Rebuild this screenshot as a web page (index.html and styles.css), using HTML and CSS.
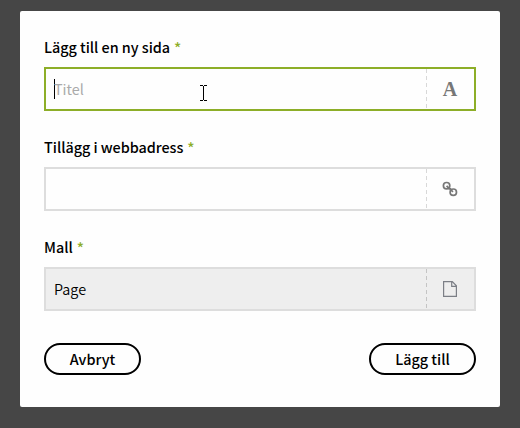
FILE: index.html
```html
<!DOCTYPE html>
<html lang="sv">
<head>
<meta charset="utf-8">
<title>Lägg till en ny sida</title>
<link rel="stylesheet" href="styles.css">
</head>
<body>
<form class="modal">
  <div class="field">
    <div class="label"><span>Lägg till en ny sida</span><span class="required">*</span></div>
    <div class="input focused">
      <div class="value placeholder"><span class="caret"></span>Titel</div>
      <div class="icon letter">A</div>
    </div>
  </div>
  <div class="field">
    <div class="label"><span>Tillägg i webbadress</span><span class="required">*</span></div>
    <div class="input">
      <div class="value"></div>
      <div class="icon">
        <svg width="16" height="16" viewBox="0 0 16 16" fill="none" stroke="#777" stroke-width="1.7"><circle cx="4.600" cy="4.700" r="3.200"/><circle cx="11.300" cy="11.200" r="3.200"/><path d="M4.600 4.800l2.400 2.500M8.300 8.400l2.700 2.500M6.600 7.900l2.600-.1"/></svg>
      </div>
    </div>
  </div>
  <div class="field">
    <div class="label"><span>Mall</span><span class="required">*</span></div>
    <div class="input readonly">
      <div class="value">Page</div>
      <div class="icon">
        <svg width="14" height="16" viewBox="0 0 14 16" fill="none" stroke="#7c7f86" stroke-width="1.2"><path d="M.6.6h8.700l4.100 4.200v10.600H.6zM8.700.8v4.600h4.600"/></svg>
      </div>
    </div>
  </div>
  <div class="actions">
    <button type="button" class="button cancel">Avbryt</button>
    <button type="button" class="button submit">Lägg till</button>
  </div>
</form>
<svg class="pointer" width="9" height="16" viewBox="0 0 9 16" fill="none" stroke="#000" shape-rendering="crispEdges"><path d="M1 .5h3M5 .5h3M4.500 1v14M1 15.500h3M5 15.500h3"/></svg>
</body>
</html>
```
FILE: styles.css
```css
* { box-sizing: border-box; }
body {
  margin: 0;
  height: 428px;
  padding: 11px 20px 21px;
  background: #464646;
  color: #000;
  font-family: "Noto Sans CJK SC", "Open Sans", sans-serif;
  font-size: 14.4px;
  overflow: hidden;
}
.modal {
  height: 396px;
  padding: 24px;
  background: #fefefe;
  border-radius: 2px;
}
.field { height: 76px; margin-bottom: 24px; }
.label {
  display: flex;
  gap: 4px;
  height: 32px;
  line-height: 24px;
  font-weight: 500;
  letter-spacing: -0.03px;
}
.required { padding-top: 1px; color: #8dae28; font-size: 15px; }
.input {
  display: flex;
  height: 44px;
  border: 2px solid #ddd;
}
.focused { border-color: #8dae28; }
.readonly { background: #eee; }
.value {
  flex: 1;
  padding-left: 8px;
  line-height: 40px;
  font-weight: 350;
}
.placeholder { display: flex; align-items: center; color: #aaa; font-weight: 400; }
.caret { width: 1px; height: 20px; margin-right: -1px; background: #000; }
.icon {
  width: 48px;
  display: flex;
  align-items: center;
  justify-content: center;
  background: repeating-linear-gradient(to bottom, #d8d8d8 0 4px, transparent 4px 7px) 0 0 / 1px 100% no-repeat;
}
.readonly .icon { background-image: repeating-linear-gradient(to bottom, #c4c4c4 0 4px, transparent 4px 7px); }
.letter { color: #777; font: bold 20px "Liberation Serif", serif; }
.actions { display: flex; justify-content: space-between; margin-top: 32px; }
.button {
  height: 32px;
  padding: 0;
  border: 2px solid #000;
  border-radius: 16px;
  background: #fefefe;
  color: #000;
  font: 500 14.4px/28px "Noto Sans CJK SC", "Open Sans", sans-serif;
}
.cancel { width: 97px; }
.submit { width: 107px; }
.pointer { position: absolute; left: 199px; top: 85px; }
```
